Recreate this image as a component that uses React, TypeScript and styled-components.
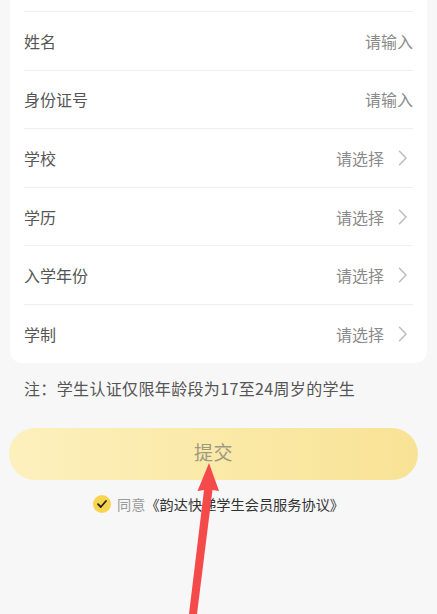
import React from "react";
import styled, { createGlobalStyle } from "styled-components";

const Global = createGlobalStyle`
  html, body { margin: 0; padding: 0; background: #f7f7f7; }
  body { font-family: "Noto Sans CJK SC", "Noto Sans", sans-serif; }
  * { box-sizing: border-box; }
`;

const Page = styled.div`
  position: relative;
  width: 437px;
  height: 614px;
  overflow: hidden;
  background: #f7f7f7;
  display: flex;
  flex-direction: column;
`;

const Card = styled.div`
  margin: 0 10px;
  background: #ffffff;
  border-radius: 0 0 12px 12px;
  padding: 11px 14px 0;
  display: flex;
  flex-direction: column;
`;

const Row = styled.div`
  height: 58.6px;
  border-top: 1px solid #efefef;
  display: flex;
  align-items: center;
  justify-content: space-between;
`;

const Label = styled.span`
  font-size: 16px;
  color: #555555;
  line-height: 20px;
`;

const Value = styled.span`
  display: flex;
  align-items: center;
  font-size: 16px;
  color: #8a8a8a;
  line-height: 20px;
`;

const Chevron = styled.svg`
  width: 29px;
  height: 16px;
`;

const Note = styled.div`
  margin: 14px 24px 0;
  font-size: 16px;
  line-height: 22px;
  letter-spacing: 0.35px;
  color: #555555;
`;

const SubmitButton = styled.button`
  margin: 29px 19px 0 9px;
  height: 52px;
  border: none;
  border-radius: 26px;
  background: linear-gradient(90deg, #fcf0bd 0%, #fae9a6 55%, #f8e295 100%);
  color: #9e9984;
  font-family: "Noto Sans CJK SC", "Noto Sans", sans-serif;
  font-size: 19px;
  letter-spacing: 0.5px;
  padding: 0 0 4px;
`;

const Agree = styled.div`
  margin-top: 14px;
  display: flex;
  align-items: center;
  justify-content: center;
  font-size: 14.2px;
  line-height: 20px;
`;

const Check = styled.span`
  width: 18px;
  height: 18px;
  border-radius: 50%;
  background: #f9d44e;
  display: inline-flex;
  align-items: center;
  justify-content: center;
  margin-right: 6px;
`;

const Muted = styled.span`
  color: #9a9a9a;
`;

const Strong = styled.span`
  color: #333333;
`;

const Arrow = styled.svg`
  position: absolute;
  left: 0;
  top: 0;
  width: 437px;
  height: 614px;
  pointer-events: none;
`;

const rows: { label: string; value: string; chevron: boolean }[] = [
  { label: "姓名", value: "请输入", chevron: false },
  { label: "身份证号", value: "请输入", chevron: false },
  { label: "学校", value: "请选择", chevron: true },
  { label: "学历", value: "请选择", chevron: true },
  { label: "入学年份", value: "请选择", chevron: true },
  { label: "学制", value: "请选择", chevron: true },
];

export default function App() {
  return (
    <>
      <Global />
      <Page>
        <Card>
          {rows.map((r) => (
            <Row key={r.label}>
              <Label>{r.label}</Label>
              <Value>
                {r.value}
                {r.chevron && (
                  <Chevron viewBox="0 0 29 16">
                    <path d="M15.5 1.2 L22 8 L15.5 14.8" fill="none" stroke="#bdbdbd" strokeWidth="1.5" strokeLinecap="round" strokeLinejoin="round" />
                  </Chevron>
                )}
              </Value>
            </Row>
          ))}
        </Card>
        <Note>注：学生认证仅限年龄段为17至24周岁的学生</Note>
        <SubmitButton>提交</SubmitButton>
        <Agree>
          <Check>
            <svg width="12" height="12" viewBox="0 0 12 12">
              <path d="M2 6.2 L4.8 9 L10 3" fill="none" stroke="#222" strokeWidth="1.8" strokeLinecap="round" strokeLinejoin="round" />
            </svg>
          </Check>
          <Muted>同意</Muted>
          <Strong>《韵达快递学生会员服务协议》</Strong>
        </Agree>
        <Arrow viewBox="0 0 437 614">
          <polygon points="209,463 197.5,491 204,490 189,614 197,614 212.5,490 219,491" fill="#f44a4a" />
        </Arrow>
      </Page>
    </>
  );
}
